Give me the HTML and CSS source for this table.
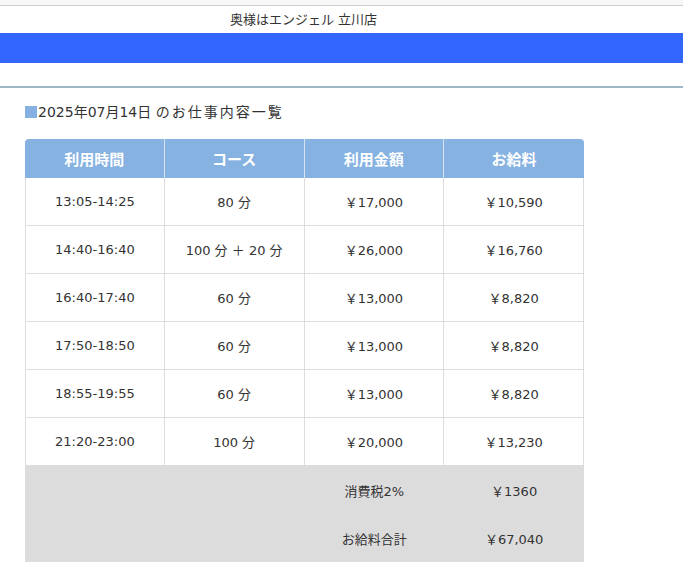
FILE: index.html
```html
<!DOCTYPE html>
<html lang="ja">
<head>
<meta charset="utf-8">
<link rel="stylesheet" href="styles.css">
</head>
<body>
<div class="topstrip"></div>
<header class="site-header">
  <div class="shop-name">奥様はエンジェル 立川店</div>
</header>
<div class="bluebar"></div>
<div class="subbar"></div>
<main class="content">
  <h2 class="page-title"><span class="square"></span>2025年07月14日 <span class="wide">のお仕事内容一覧</span></h2>
  <table class="work-table">
    <thead>
      <tr><th>利用時間</th><th>コース</th><th>利用金額</th><th>お給料</th></tr>
    </thead>
    <tbody>
      <tr><td>13:05-14:25</td><td>80 分</td><td>￥17,000</td><td>￥10,590</td></tr>
      <tr><td>14:40-16:40</td><td>100 分 ＋ 20 分</td><td>￥26,000</td><td>￥16,760</td></tr>
      <tr><td>16:40-17:40</td><td>60 分</td><td>￥13,000</td><td>￥8,820</td></tr>
      <tr><td>17:50-18:50</td><td>60 分</td><td>￥13,000</td><td>￥8,820</td></tr>
      <tr><td>18:55-19:55</td><td>60 分</td><td>￥13,000</td><td>￥8,820</td></tr>
      <tr><td>21:20-23:00</td><td>100 分</td><td>￥20,000</td><td>￥13,230</td></tr>
    </tbody>
    <tfoot>
      <tr><td></td><td></td><td>消費税2%</td><td>￥1360</td></tr>
      <tr><td></td><td></td><td>お給料合計</td><td>￥67,040</td></tr>
    </tfoot>
  </table>
</main>
</body>
</html>
```
FILE: styles.css
```css
html, body {
  margin: 0;
  padding: 0;
  background: #fff;
  font-family: "DejaVu Sans", "Noto Sans CJK JP", sans-serif;
  color: #333;
}
.topstrip {
  height: 5px;
  background: #f7f7f9;
  border-bottom: 1px solid #cfcfcf;
}
.site-header {
  height: 27px;
  display: flex;
  align-items: center;
  justify-content: center;
  padding-right: 76px;
}
.shop-name {
  font-size: 13px;
  color: #333;
  line-height: 1;
}
.bluebar {
  height: 30px;
  background: #3366ff;
}
.subbar {
  height: 23px;
  border-bottom: 2px solid #9fb9c6;
}
.content {
  padding: 0 25px;
}
.page-title {
  margin: 2px 0 16px;
  padding-top: 11px;
  height: 33px;
  box-sizing: border-box;
  display: flex;
  align-items: center;
  font-size: 14px;
  font-weight: normal;
  color: #333;
  line-height: 20px;
  white-space: pre;
}
.wide {
  letter-spacing: 2px;
}
.square {
  display: inline-block;
  width: 12px;
  height: 12px;
  background: #86b0e2;
  margin-right: 1px;
}
.work-table {
  width: 559px;
  border-collapse: separate;
  border-spacing: 0;
  table-layout: fixed;
  font-size: 13px;
}
.work-table th {
  background: #86b2e2;
  color: #fff;
  font-size: 15px;
  font-weight: bold;
  height: 39px;
  padding: 0;
  border-right: 1px solid #d6e2f0;
}
.work-table th:first-child {
  border-top-left-radius: 4px;
}
.work-table th:last-child {
  border-top-right-radius: 4px;
  border-right: none;
}
.work-table tbody td {
  height: 47px;
  padding: 0;
  text-align: center;
  color: #333;
  border-right: 1px solid #dddddd;
  border-bottom: 1px solid #dddddd;
}
.work-table tbody td:first-child {
  border-left: 1px solid #dddddd;
}
.work-table tfoot td {
  height: 48px;
  padding: 0;
  text-align: center;
  background: #dcdcdc;
  color: #333;
}
```
